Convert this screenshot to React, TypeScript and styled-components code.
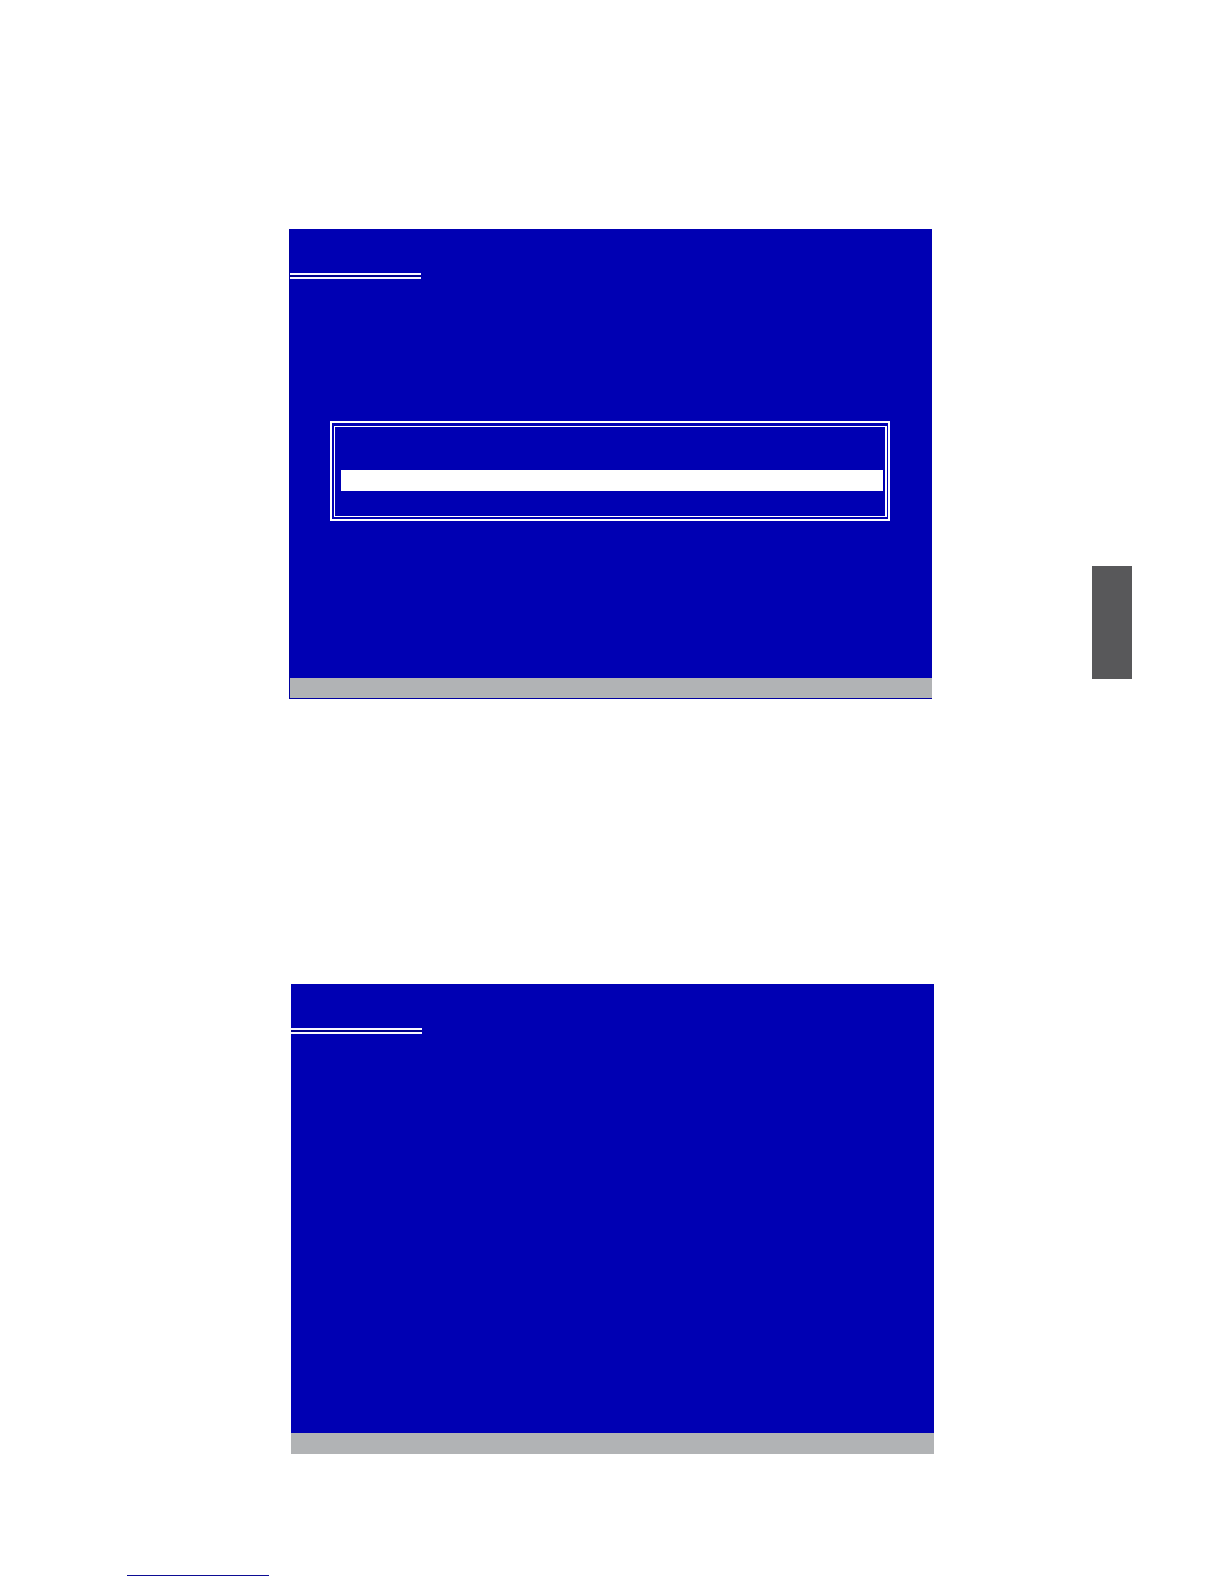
import React from "react";
import styled, { createGlobalStyle } from "styled-components";

const GlobalStyle = createGlobalStyle`
  body {
    margin: 0;
    background: #ffffff;
    font-family: "Liberation Sans", sans-serif;
  }
`;

const Page = styled.main`
  display: flex;
  flex-direction: column;
  padding: 229px 0 8px;
`;

const FigureRow = styled.section<{ $left: number; $right: number }>`
  display: grid;
  grid-template-columns: ${(p) => p.$left}fr 643fr ${(p) => p.$right}fr;
  align-items: start;

  & + & {
    margin-top: 285px;
  }
`;

const Screen = styled.div<{ $outlined?: boolean }>`
  grid-column: 2;
  box-sizing: border-box;
  min-height: 470px;
  display: flex;
  flex-direction: column;
  background: #0000b3;
  border: 0 solid #0000a0;
  border-width: ${(p) => (p.$outlined ? "0 0 1px 1px" : "0")};
`;

const TitleRule = styled.div`
  box-sizing: border-box;
  width: 131px;
  height: 6px;
  margin-top: 44px;
  border: solid #f8f8ff;
  border-width: 2px 0;
  background: #00008c;
`;

const Dialog = styled.div`
  margin: 142px 42px 0 40px;
  padding: 3px 1px 2px 2px;
  border: 2px solid #ffffff;
`;

const DialogInner = styled.div`
  padding: 43px 2px 25px 6px;
  border: 1px solid #ffffff;
  border-right-width: 2px;
`;

const Highlight = styled.div`
  height: 21px;
  background: #ffffff;
`;

const StatusBar = styled.div<{ $height: number }>`
  height: ${(p) => p.$height}px;
  margin-top: auto;
  background: #b1b3b5;
`;

const ChapterTab = styled.div`
  grid-column: 3;
  width: 40px;
  height: 113px;
  margin: 337px 0 0 160px;
  background: #58585a;
`;

const FootRule = styled.hr`
  width: 142px;
  height: 1px;
  margin: 121px 0 0 127px;
  border: 0;
  background: #0c0c94;
`;

export default function App() {
  return (
    <>
      <GlobalStyle />
      <Page>
        <FigureRow $left={289} $right={292}>
          <Screen $outlined>
            <TitleRule />
            <Dialog>
              <DialogInner>
                <Highlight />
              </DialogInner>
            </Dialog>
            <StatusBar $height={20} />
          </Screen>
          <ChapterTab />
        </FigureRow>
        <FigureRow $left={291} $right={290}>
          <Screen>
            <TitleRule />
            <StatusBar $height={21} />
          </Screen>
        </FigureRow>
        <FootRule />
      </Page>
    </>
  );
}
